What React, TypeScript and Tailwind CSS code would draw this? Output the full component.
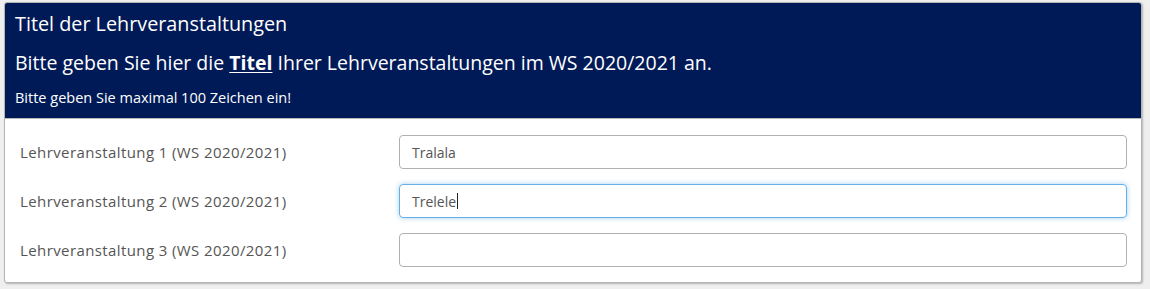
export default function App() {
  const rows = [
    { label: "Lehrveranstaltung 1 (WS 2020/2021)", value: "Tralala", focused: false },
    { label: "Lehrveranstaltung 2 (WS 2020/2021)", value: "Trelele", focused: true },
    { label: "Lehrveranstaltung 3 (WS 2020/2021)", value: "", focused: false },
  ];

  return (
    <div className="h-[289px] w-[1150px] bg-[#efefef] pl-[4px] pt-[2px] font-['Open_Sans',sans-serif]">
      <div className="w-[1138px] overflow-hidden rounded-[3px] border border-[#b4b4b4] bg-white shadow-[1px_1px_2px_rgba(0,0,0,0.25)]">
        <div className="h-[116px] border-b border-[#b9b9b9] bg-[#001a57] px-[10px] pt-[8px] text-white">
          <h1 className="text-[19.8px] leading-[26px]">Titel der Lehrveranstaltungen</h1>
          <p className="mt-[13px] text-[19.5px] leading-[26px]">
            Bitte geben Sie hier die <span className="font-bold underline underline-offset-2">Titel</span> Ihrer
            Lehrveranstaltungen im WS 2020/2021 an.
          </p>
          <p className="mt-[13px] text-[14.5px] leading-[18px]">Bitte geben Sie maximal 100 Zeichen ein!</p>
        </div>
        <div className="flex flex-col gap-[15px] pb-[15px] pl-[15px] pr-[14px] pt-[16px]">
          {rows.map((r) => (
            <div key={r.label} className="flex items-center">
              <label className="w-[379px] text-[15px] tracking-[0.4px] text-[#555]">{r.label}</label>
              <div
                className={`flex h-[34px] flex-1 items-center rounded-[4px] border px-[12px] text-[14px] text-[#555] ${
                  r.focused
                    ? "border-[#66afe9] shadow-[0_0_5px_rgba(102,175,233,0.6)]"
                    : "border-[#b0b0b0]"
                }`}
              >
                {r.value}
                {r.focused && <span className="ml-[1px] h-[16px] w-[1px] bg-[#222]" />}
              </div>
            </div>
          ))}
        </div>
      </div>
    </div>
  );
}
